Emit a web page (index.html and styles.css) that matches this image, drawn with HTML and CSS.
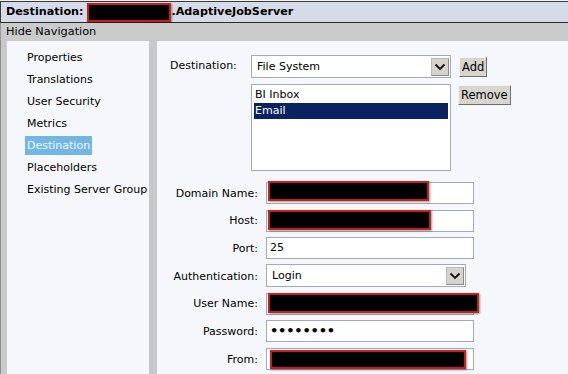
FILE: index.html
```html
<!DOCTYPE html>
<html>
<head>
<meta charset="utf-8">
<link rel="stylesheet" href="styles.css">
</head>
<body>
<div class="page">
  <div class="title">Destination: <span class="redact title-redact"></span>.AdaptiveJobServer</div>
  <div class="navbar">Hide Navigation</div>
  <div class="main">
    <nav class="side">
      <div class="nav-item">Properties</div>
      <div class="nav-item">Translations</div>
      <div class="nav-item">User Security</div>
      <div class="nav-item">Metrics</div>
      <div class="nav-item"><span class="active">Destination</span></div>
      <div class="nav-item">Placeholders</div>
      <div class="nav-item">Existing Server Group</div>
    </nav>
    <section class="content">
      <div class="dest-block">
        <div class="dest-label">Destination:</div>
        <div class="dest-fields">
          <div class="select dest-select">
            <span class="select-value">File System</span>
            <span class="arrow"><svg width="12" height="8" viewBox="0 0 12 8"><path d="M1.5 1.5 L6 6 L10.5 1.5" fill="none" stroke="#111" stroke-width="1.8"/></svg></span>
          </div>
          <div class="listbox">
            <div class="opt">BI Inbox</div>
            <div class="opt selected">Email</div>
          </div>
        </div>
        <div class="dest-buttons">
          <div class="btn btn-add">Add</div>
          <div class="btn btn-remove">Remove</div>
        </div>
      </div>
      <div class="form">
        <div class="lbl">Domain Name:</div>
        <div class="field"><div class="input"></div><span class="redact r-domain"></span></div>
        <div class="lbl">Host:</div>
        <div class="field"><div class="input"></div><span class="redact r-host"></span></div>
        <div class="lbl">Port:</div>
        <div class="field"><div class="input">25</div></div>
        <div class="lbl">Authentication:</div>
        <div class="field">
          <div class="select auth-select">
            <span class="select-value">Login</span>
            <span class="arrow"><svg width="12" height="8" viewBox="0 0 12 8"><path d="M1.5 1.5 L6 6 L10.5 1.5" fill="none" stroke="#111" stroke-width="1.8"/></svg></span>
          </div>
        </div>
        <div class="lbl">User Name:</div>
        <div class="field"><div class="input"></div><span class="redact r-user"></span></div>
        <div class="lbl">Password:</div>
        <div class="field"><div class="input pw">••••••••</div></div>
        <div class="lbl">From:</div>
        <div class="field"><div class="input"></div><span class="redact r-from"></span></div>
      </div>
    </section>
  </div>
</div>
</body>
</html>
```

FILE: styles.css
```css
html, body {
  margin: 0;
  padding: 0;
  height: 100%;
  overflow: hidden;
}
body {
  background: #c7c8cb;
  font-family: "DejaVu Sans", Verdana, sans-serif;
  font-size: 11px;
  color: #000;
}
.page {
  padding-top: 1px;
  background: #f2f2f2;
  height: 100%;
  display: flex;
  flex-direction: column;
}
.title {
  height: 20px;
  line-height: 20px;
  border-top: 1px solid #3a3a3a;
  border-bottom: 1px solid #2a2a2a;
  border-left: 1px solid #3a3a3a;
  background: #d5dce8;
  font-weight: bold;
  font-size: 11.2px;
  padding-left: 5px;
  white-space: nowrap;
}
.redact {
  display: inline-block;
  background: #000;
  border: 2px solid #c81e1e;
  box-shadow: 1px 1px 2px rgba(0,0,0,0.4);
  box-sizing: border-box;
}
.title-redact {
  width: 84px;
  height: 19px;
  vertical-align: top;
  margin-top: 1px;
}
.navbar {
  height: 17px;
  line-height: 18px;
  background: #cbcbcc;
  border-left: 1px solid #9a9a9a;
  padding-left: 5px;
  font-size: 11.3px;
}
.main {
  flex: 1;
  display: flex;
  gap: 8px;
  padding-left: 6px;
  padding-top: 1px;
  background: #c7c8cb;
  border-left: 1px solid #8c8c8c;
}
.side {
  width: 142px;
  flex: none;
  background: #f6f7fc;
  padding-top: 6px;
  padding-left: 18px;
  box-sizing: border-box;
  white-space: nowrap;
  overflow: hidden;
}
.nav-item {
  height: 22px;
  line-height: 22px;
  padding-left: 2px;
}
.active {
  background: #73b6e3;
  color: #eef6fc;
  padding: 3px 2px;
  margin-left: -2px;
}
.content {
  flex: 1;
  background: #f6f7fc;
  padding-top: 14px;
  padding-left: 13px;
  box-sizing: border-box;
}
.dest-block {
  display: flex;
  align-items: flex-start;
}
.dest-label {
  width: 81px;
  height: 23px;
  line-height: 21px;
}
.dest-fields {
  width: 200px;
  display: flex;
  flex-direction: column;
  gap: 6px;
}
.select {
  height: 23px;
  box-sizing: border-box;
  border: 1px solid #a4a9b8;
  background: #fff;
  display: flex;
  align-items: center;
  justify-content: space-between;
  padding: 0 1px 0 5px;
}
.select-value {
  line-height: 20px;
}
.arrow {
  width: 18px;
  height: 18px;
  box-sizing: border-box;
  background: #d6d3cc;
  border: 1px solid #8a8a8a;
  border-top-color: #b8b8b8;
  border-left-color: #b8b8b8;
  display: flex;
  align-items: center;
  justify-content: center;
}
.listbox {
  height: 87px;
  box-sizing: border-box;
  border: 1px solid #a4a9b8;
  background: #fff;
  padding: 2px 2px 0 2px;
}
.opt {
  height: 16px;
  line-height: 16px;
  padding-left: 1px;
}
.opt.selected {
  background: #0b2260;
  color: #fff;
}
.dest-buttons {
  margin-left: 7px;
  display: flex;
  flex-direction: column;
  align-items: flex-start;
  gap: 8px;
  padding-top: 2px;
}
.btn {
  height: 20px;
  line-height: 18px;
  box-sizing: border-box;
  background: #d8d5cf;
  border: 1px solid #f4f4f4;
  border-right-color: #6e6e6e;
  border-bottom-color: #6e6e6e;
  padding: 0 2px;
  font-size: 11.5px;
}
.btn-add {
  margin-left: 1px;
}
.form {
  margin-top: 11px;
  margin-left: -13px;
  display: grid;
  grid-template-columns: 101px 208px;
  column-gap: 8px;
  row-gap: 5.7px;
  align-items: center;
}
.lbl {
  text-align: right;
}
.field {
  position: relative;
  height: 22px;
}
.input {
  height: 22px;
  box-sizing: border-box;
  border: 1px solid #a4a9b8;
  background: #fff;
  line-height: 20px;
  padding-left: 3px;
}
.input.pw {
  font-size: 13px;
  font-weight: bold;
  letter-spacing: -0.2px;
  padding-left: 3px;
}
.auth-select {
  width: 200px;
  height: 23px;
  margin-top: -1px;
}
.field .redact {
  position: absolute;
}
.r-domain {
  left: 2px;
  top: -1px;
  width: 161px;
  height: 20px;
}
.r-host {
  left: 2px;
  top: 0px;
  width: 163px;
  height: 20px;
}
.r-user {
  left: 2px;
  top: 0px;
  width: 211px;
  height: 20px;
}
.r-from {
  left: 4px;
  top: 2px;
  width: 196px;
  height: 19px;
}
```
